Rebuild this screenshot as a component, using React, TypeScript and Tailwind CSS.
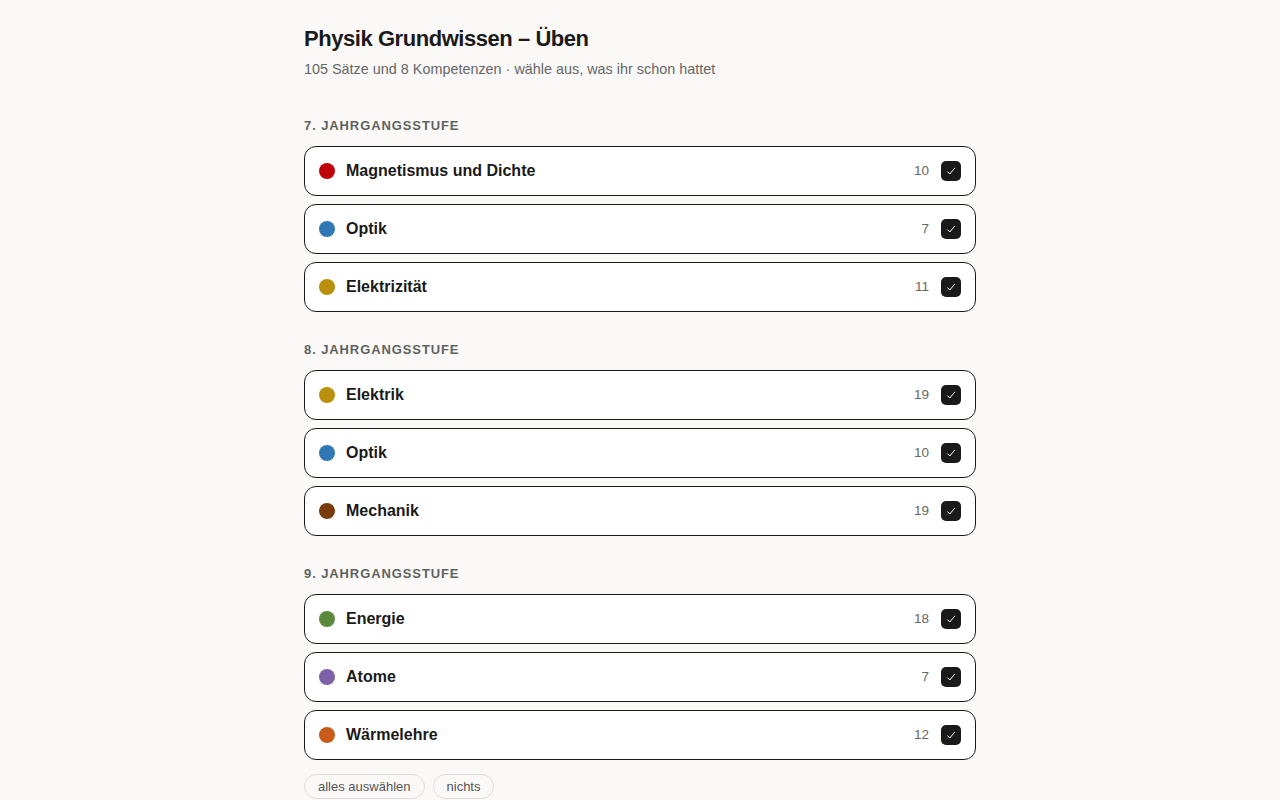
import React from "react";

type Item = { name: string; count: number; color: string };
const sections: { label: string; items: Item[] }[] = [
  {
    label: "7. Jahrgangsstufe",
    items: [
      { name: "Magnetismus und Dichte", count: 10, color: "#c00008" },
      { name: "Optik", count: 7, color: "#2f78b5" },
      { name: "Elektrizität", count: 11, color: "#b98f0b" },
    ],
  },
  {
    label: "8. Jahrgangsstufe",
    items: [
      { name: "Elektrik", count: 19, color: "#b98f0b" },
      { name: "Optik", count: 10, color: "#2f78b5" },
      { name: "Mechanik", count: 19, color: "#7a3b0c" },
    ],
  },
  {
    label: "9. Jahrgangsstufe",
    items: [
      { name: "Energie", count: 18, color: "#5b8a3c" },
      { name: "Atome", count: 7, color: "#7e62a9" },
      { name: "Wärmelehre", count: 12, color: "#c95b1a" },
    ],
  },
];

function Row({ item }: { item: Item }) {
  return (
    <div className="flex h-[50px] items-center rounded-[12px] border border-[#1a1a1a] bg-white pl-[14px] pr-[14px]">
      <span className="h-[16px] w-[16px] shrink-0 rounded-full" style={{ backgroundColor: item.color }} />
      <span className="ml-[11px] text-[16px] font-bold text-[#1a1a1a]">{item.name}</span>
      <span className="ml-auto text-[13.5px] text-[#666]">{item.count}</span>
      <span className="ml-[12px] flex h-[20px] w-[20px] items-center justify-center rounded-[5px] bg-[#1a1a1a]">
        <svg width="12" height="12" viewBox="0 0 12 12" fill="none">
          <path d="M2.6 6.8 L4.8 9 L9.6 3.2" stroke="white" strokeWidth="1" strokeLinecap="round" strokeLinejoin="round" />
        </svg>
      </span>
    </div>
  );
}

export default function App() {
  return (
    <div className="min-h-screen bg-[#faf9f7]" style={{ fontFamily: '"Liberation Sans", Arial, sans-serif' }}>
      <div className="mx-auto w-[672px] pt-[25px]">
        <h1 className="text-[22px] font-bold leading-[28px] tracking-[-0.45px] text-[#1a1a1a]">Physik Grundwissen – Üben</h1>
        <p className="mt-[6px] text-[14.4px] leading-[20px] text-[#666]">
          105 Sätze und 8 Kompetenzen · wähle aus, was ihr schon hattet
        </p>
        {sections.map((s, i) => (
          <div key={s.label} className={i === 0 ? "mt-[39px]" : "mt-[30px]"}>
            <div className="text-[13px] font-bold uppercase leading-[16px] tracking-[0.9px] text-[#616161]">{s.label}</div>
            <div className="mt-[12px] flex flex-col gap-[8px]">
              {s.items.map((it) => (
                <Row key={it.name + it.count} item={it} />
              ))}
            </div>
          </div>
        ))}
        <div className="mt-[14px] flex gap-[8px] pb-4">
          <button className="h-[25px] rounded-full border border-[#e0ddd8] px-[13px] text-[13px] text-[#555]">alles auswählen</button>
          <button className="h-[25px] rounded-full border border-[#e0ddd8] px-[13px] text-[13px] text-[#555]">nichts</button>
        </div>
      </div>
    </div>
  );
}
